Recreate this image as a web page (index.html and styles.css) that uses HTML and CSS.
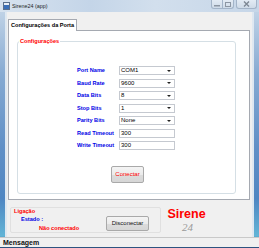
FILE: index.html
```html
<!DOCTYPE html>
<html lang="pt">
  <head>
    <meta charset="UTF-8" />
    <title>Sirene24 (app)</title>
    <link rel="stylesheet" href="styles.css">
  </head>
  <body>
    <div class="window">
      <div class="titlebar">
        <svg class="app-icon" width="7" height="8" viewBox="0 0 7 8">
          <rect x="0.5" y="0.5" width="6" height="7" fill="#e8eef6" stroke="#5a6f8c" />
          <rect x="1" y="3" width="5" height="4" fill="#3a6fb8" />
        </svg>
        <span class="title">Sirene24 (app)</span>
        <div class="caption-buttons">
          <div class="cap-btn cap-min">
            <svg width="6" height="5" viewBox="0 0 6 5"><rect x="0" y="3" width="6" height="1.5" fill="#8c96a3" /></svg>
          </div>
          <div class="cap-btn cap-max">
            <svg width="6" height="5" viewBox="0 0 6 5"><rect x="0.5" y="0.5" width="5" height="4" fill="none" stroke="#8c96a3" /></svg>
          </div>
          <div class="cap-btn cap-close">
            <svg width="7" height="6" viewBox="0 0 7 6"><path d="M1 0.5 L6 5.5 M6 0.5 L1 5.5" stroke="#7d8794" stroke-width="1.4" /></svg>
          </div>
        </div>
      </div>

      <div class="client">
        <div class="tab-strip">
          <div class="tab">Configurações da Porta</div>
        </div>
        <div class="tab-page">
          <fieldset class="group">
            <legend>Configurações</legend>
            <div class="fields">
              <label>Port Name</label>
              <div class="combo"><span>COM1</span><i class="arrow"></i></div>
              <label>Baud Rate</label>
              <div class="combo"><span>9600</span><i class="arrow"></i></div>
              <label>Data Bits</label>
              <div class="combo"><span>8</span><i class="arrow"></i></div>
              <label>Stop Bits</label>
              <div class="combo"><span>1</span><i class="arrow"></i></div>
              <label>Parity Bits</label>
              <div class="combo"><span>None</span><i class="arrow"></i></div>
              <label>Read Timeout</label>
              <div class="textbox">300</div>
              <label>Write Timeout</label>
              <div class="textbox">300</div>
            </div>
            <button type="button" class="btn btn-connect">Conectar</button>
          </fieldset>
        </div>

        <div class="bottom">
          <div class="link-box">
            <div class="link-texts">
              <div class="lig">Ligação</div>
              <div class="estado">Estado :</div>
              <div class="status">Não conectado</div>
            </div>
            <button type="button" class="btn btn-disconnect">Disconectar</button>
          </div>
          <div class="brand">
            <div class="brand-name">Sirene</div>
            <div class="brand-num">24</div>
          </div>
        </div>
      </div>

      <div class="statusbar">Mensagem</div>
    </div>
  </body>
</html>
```

FILE: styles.css
```css
* {
  box-sizing: border-box;
}
body {
  margin: 0;
  width: 259px;
  height: 248px;
  overflow: hidden;
  font-family: "Liberation Sans", Arial, sans-serif;
}
.window {
  width: 259px;
  height: 248px;
  display: flex;
  flex-direction: column;
  padding-bottom: 1px;
  background: linear-gradient(180deg, #cddbea 0, #bfd2e6 12px, #86aad2 30%, #5f8fc6 60%, #4f86c2 80%, #62b4d6 95%, #2b4f7c 100%);
}

/* title bar */
.titlebar {
  height: 12px;
  display: flex;
  align-items: flex-start;
  padding-left: 3px;
  background: linear-gradient(90deg, #d6e2ef, #c4d5e8 35%, #d2dfed 60%, #c6d6e8);
}
.app-icon {
  margin-top: 2px;
}
.title {
  font-family: "Liberation Sans", Arial, sans-serif;
  font-size: 5.4px;
  line-height: 8px;
  margin: 2px 0 0 2px;
  color: #1e1e1e;
}
.caption-buttons {
  margin-left: auto;
  margin-right: 2px;
  display: flex;
}
.cap-btn {
  height: 9px;
  display: flex;
  align-items: center;
  justify-content: center;
  border: 1px solid #a3b4c8;
  border-top: none;
  background: linear-gradient(180deg, #e3ebf4, #cfdbe8);
}
.cap-min {
  width: 12px;
  border-radius: 0 0 0 3px;
}
.cap-max {
  width: 11px;
  border-left: none;
  border-radius: 0 0 3px 0;
}
.cap-close {
  width: 21px;
  margin-left: 2px;
  border-radius: 0 0 3px 3px;
}

/* client area */
.client {
  display: flex;
  flex-direction: column;
  margin: 0 5px;
  border-left: 2px solid #dfe8f1;
  border-right: 2px solid #dfe8f1;
  background: #f0f0f0;
  height: 225px;
}
.tab-strip {
  display: flex;
  padding: 7px 0 0 1px;
}
.tab {
  height: 12px;
  margin-bottom: -1px;
  padding: 0 2px;
  border: 1px solid #a5a9b1;
  border-bottom: none;
  background: #fff;
  font-size: 5.6px;
  font-weight: bold;
  line-height: 10px;
  position: relative;
  z-index: 1;
}
.tab-page {
  height: 170px;
  margin: 0 2px 0 1px;
  padding: 7px 13px 5px 8px;
  display: flex;
  border: 1px solid #a5a9b1;
  background: #fff;
}
.group {
  flex: 1;
  min-width: 0;
  margin: 0;
  padding: 0;
  display: flex;
  flex-direction: column;
  border: 1px solid #d5dfe5;
  border-radius: 3px;
}
.group legend {
  margin-left: 1px;
  padding: 0 1px;
  color: #ff0000;
  font-size: 5.6px;
  font-weight: bold;
  line-height: 7px;
}
.fields {
  display: grid;
  grid-template-columns: 42px 56px;
  grid-auto-rows: 9px;
  row-gap: 3.5px;
  align-items: center;
  margin: 21px 0 0 59px;
}
.fields label {
  color: #0000e6;
  font-size: 5.6px;
  font-weight: bold;
  line-height: 9px;
}
.combo, .textbox {
  height: 9px;
  display: flex;
  align-items: center;
  justify-content: space-between;
  padding: 0 2px 0 1px;
  border: 1px solid #c5c9d0;
  background: #fff;
  font-size: 6px;
  line-height: 7px;
  color: #000;
}
.arrow {
  width: 0;
  height: 0;
  margin-right: 1px;
  border-left: 2px solid transparent;
  border-right: 2px solid transparent;
  border-top: 2px solid #222;
}

/* buttons */
.btn {
  padding: 0;
  border: 1px solid #a9a9a9;
  border-radius: 2px;
  background: linear-gradient(180deg, #f4f4f4 0, #ebebeb 50%, #dcdcdc 51%, #d6d6d6 100%);
  font-family: "Liberation Sans", Arial, sans-serif;
  font-size: 6px;
  line-height: 7px;
}
.btn-connect {
  align-self: center;
  width: 33px;
  height: 17px;
  margin: 16px 0 0 2px;
  color: #ff0000;
}

/* bottom panel */
.bottom {
  height: 37px;
  display: flex;
  padding: 7px 0 0 3px;
}
.link-box {
  width: 151px;
  height: 26px;
  display: flex;
  padding: 0 0 0 3px;
  border: 1px solid #e0e0e0;
  border-radius: 2px;
}
.link-texts {
  font-size: 5.6px;
  font-weight: bold;
}
.lig {
  color: #ff0000;
  line-height: 7px;
}
.estado {
  color: #0000e6;
  line-height: 9px;
  margin-left: 7px;
}
.status {
  color: #ff0000;
  line-height: 9px;
  margin-left: 25px;
}
.btn-disconnect {
  align-self: flex-end;
  width: 43px;
  height: 15px;
  margin: 0 11px 1px auto;
  color: #111;
}
.brand {
  display: flex;
  flex-direction: column;
  align-items: center;
  margin-left: 7px;
  width: 37px;
}
.brand-name {
  margin-top: 1px;
  color: #ff0000;
  font-size: 12.5px;
  font-weight: bold;
  line-height: 13px;
}
.brand-num {
  margin: 1px 0 0 2px;
  color: #9a9a9a;
  font-family: "Liberation Serif", "Times New Roman", serif;
  font-style: italic;
  font-size: 11px;
  line-height: 11px;
}

/* status bar */
.statusbar {
  height: 10px;
  padding-left: 3px;
  border-top: 1px solid #c9c9c9;
  background: #f0f0f0;
  font-size: 7px;
  font-weight: bold;
  line-height: 9px;
  color: #111;
}
```
